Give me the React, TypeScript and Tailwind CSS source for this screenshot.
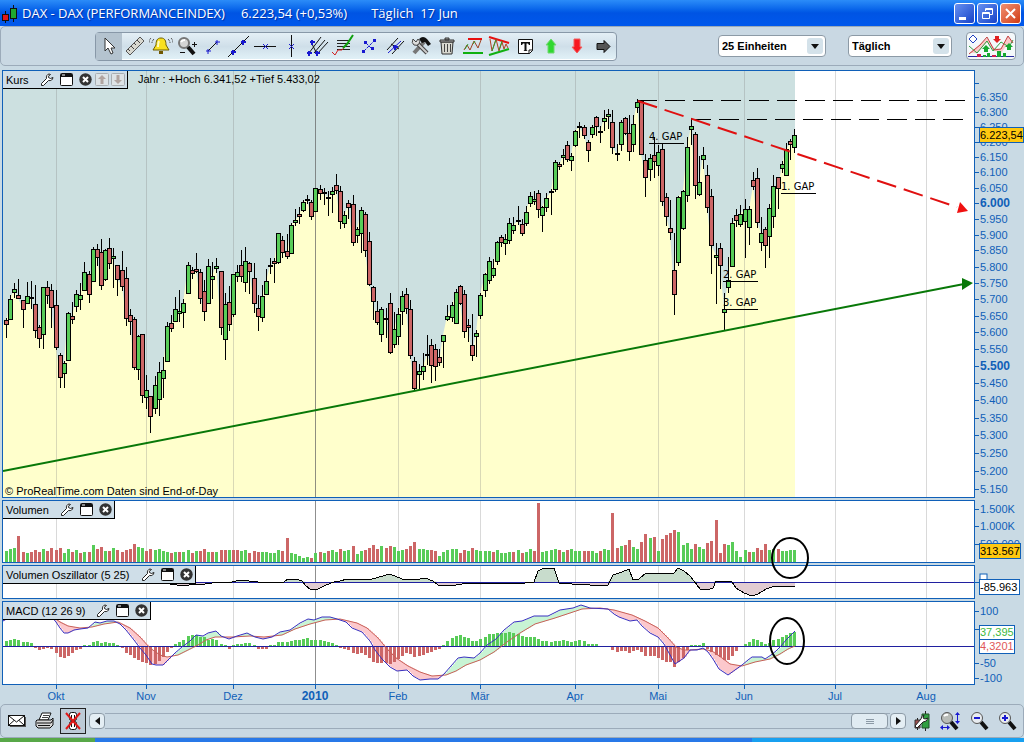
import type { ReactNode } from "react";

const MONTHS = [
  { x: 56, label: "Okt" },
  { x: 146, label: "Nov" },
  { x: 233, label: "Dez" },
  { x: 315, label: "2010", year: true },
  { x: 398, label: "Feb" },
  { x: 480, label: "Mär" },
  { x: 575, label: "Apr" },
  { x: 658, label: "Mai" },
  { x: 744, label: "Jun" },
  { x: 835, label: "Jul" },
  { x: 926, label: "Aug" },
];

// high, body top, body bottom, low, 1 = up day (all y values in window pixels)
const CANDLES = [
  [318, 320, 324, 337, 0], [295, 299, 319, 319, 1], [283, 289, 292, 297, 1], [279, 295, 298, 298, 0],
  [300, 300, 309, 327, 0], [282, 296, 303, 303, 1], [281, 297, 298, 308, 0], [285, 304, 330, 337, 0],
  [325, 327, 338, 347, 0], [287, 287, 334, 348, 1], [281, 287, 295, 303, 0], [284, 290, 307, 327, 0],
  [290, 305, 347, 349, 0], [353, 355, 377, 387, 0], [361, 363, 373, 387, 1], [312, 313, 360, 360, 1],
  [302, 316, 319, 323, 0], [290, 294, 306, 311, 1], [283, 295, 299, 309, 1], [262, 272, 290, 290, 1],
  [271, 274, 294, 302, 0], [247, 249, 281, 281, 1], [244, 249, 257, 265, 0], [239, 252, 285, 289, 0],
  [249, 250, 279, 280, 1], [238, 248, 263, 268, 0], [248, 256, 258, 287, 1], [265, 265, 279, 295, 0],
  [251, 270, 286, 290, 0], [267, 278, 318, 325, 0], [309, 315, 321, 334, 0], [317, 319, 367, 369, 0],
  [335, 336, 369, 379, 1], [334, 334, 395, 402, 0], [375, 390, 397, 408, 1], [396, 396, 416, 432, 0],
  [376, 385, 408, 413, 1], [362, 372, 399, 415, 1], [357, 370, 378, 397, 1], [322, 326, 361, 361, 1],
  [315, 323, 328, 331, 0], [297, 309, 321, 321, 1], [290, 311, 313, 321, 1], [299, 303, 312, 327, 1],
  [262, 265, 293, 293, 1], [267, 270, 273, 278, 0], [253, 269, 271, 272, 0], [269, 272, 298, 303, 0],
  [280, 291, 311, 320, 0], [259, 266, 303, 303, 1], [262, 276, 279, 298, 1], [258, 266, 268, 272, 1],
  [271, 271, 327, 334, 0], [293, 304, 339, 359, 1], [286, 302, 324, 330, 0], [274, 274, 314, 316, 1],
  [265, 272, 276, 281, 1], [250, 265, 276, 281, 0], [247, 261, 282, 291, 1], [262, 263, 271, 293, 0],
  [263, 278, 303, 312, 0], [295, 308, 316, 330, 0], [285, 296, 317, 321, 1], [269, 281, 294, 294, 1],
  [258, 265, 266, 273, 0], [258, 261, 263, 282, 0], [233, 233, 262, 263, 1], [236, 240, 252, 257, 0],
  [234, 251, 256, 258, 0], [223, 225, 253, 253, 1], [209, 220, 222, 225, 1], [207, 214, 216, 223, 0],
  [200, 202, 210, 211, 1], [195, 199, 200, 203, 0], [200, 202, 216, 219, 0], [188, 188, 211, 211, 1],
  [185, 189, 193, 199, 0], [188, 192, 193, 204, 0], [191, 197, 198, 215, 0], [187, 191, 194, 212, 1],
  [174, 185, 190, 193, 0], [186, 191, 221, 228, 0], [211, 215, 223, 227, 1], [200, 203, 207, 218, 0],
  [195, 204, 242, 245, 0], [227, 229, 235, 242, 1], [207, 210, 233, 252, 1], [212, 214, 250, 256, 0],
  [232, 241, 284, 285, 0], [286, 287, 301, 319, 0], [301, 311, 322, 324, 0], [307, 309, 334, 341, 1],
  [308, 318, 319, 337, 0], [293, 303, 352, 353, 0], [312, 329, 344, 347, 1], [308, 314, 336, 344, 1],
  [291, 296, 311, 324, 1], [288, 294, 308, 313, 0], [300, 309, 355, 358, 0], [357, 361, 388, 390, 0],
  [364, 371, 374, 389, 1], [353, 366, 371, 379, 1], [335, 354, 355, 364, 0], [339, 345, 365, 382, 0],
  [344, 349, 366, 380, 0], [349, 357, 362, 365, 0], [335, 335, 341, 367, 1], [305, 316, 319, 320, 1],
  [302, 305, 317, 321, 1], [289, 292, 323, 323, 1], [285, 286, 303, 304, 0], [290, 294, 331, 337, 0],
  [319, 325, 327, 341, 0], [314, 345, 355, 360, 0], [330, 333, 336, 356, 1], [293, 295, 315, 318, 1],
  [273, 274, 290, 296, 1], [257, 261, 280, 283, 1], [259, 268, 275, 277, 1], [241, 242, 261, 264, 1],
  [235, 237, 242, 246, 0], [234, 239, 243, 254, 1], [218, 223, 240, 243, 1], [217, 225, 230, 233, 1],
  [206, 220, 221, 224, 0], [219, 224, 233, 235, 0], [206, 212, 223, 225, 1], [192, 196, 203, 206, 1],
  [191, 199, 201, 204, 1], [190, 193, 209, 217, 0], [206, 207, 215, 231, 1], [193, 198, 207, 211, 1],
  [189, 191, 192, 214, 0], [160, 162, 189, 191, 1], [162, 164, 166, 169, 0], [149, 155, 157, 164, 1],
  [141, 145, 159, 161, 0], [153, 156, 160, 170, 1], [130, 131, 145, 146, 1], [122, 126, 127, 137, 0],
  [125, 127, 135, 138, 0], [140, 142, 150, 161, 0], [125, 127, 134, 137, 1], [116, 117, 126, 135, 0],
  [126, 131, 132, 142, 0], [110, 118, 121, 130, 1], [109, 114, 116, 128, 1], [110, 122, 147, 153, 0],
  [144, 153, 154, 160, 0], [120, 122, 144, 150, 1], [117, 118, 133, 134, 0], [115, 133, 151, 160, 0],
  [115, 124, 144, 151, 1], [99, 102, 107, 112, 1], [101, 101, 154, 154, 0], [154, 160, 177, 196, 0],
  [154, 158, 169, 180, 1], [137, 155, 161, 177, 0], [145, 152, 165, 175, 1], [144, 149, 201, 205, 0],
  [193, 197, 216, 225, 0], [200, 228, 232, 239, 0], [233, 270, 294, 314, 0], [196, 197, 262, 265, 1],
  [190, 191, 228, 229, 1], [137, 147, 195, 201, 1], [118, 126, 129, 144, 1], [132, 134, 185, 198, 0],
  [156, 182, 194, 195, 1], [147, 155, 159, 168, 1], [165, 175, 207, 212, 0], [189, 196, 245, 273, 0],
  [243, 255, 257, 303, 1], [243, 248, 265, 288, 0], [293, 309, 312, 329, 1], [257, 280, 287, 292, 1],
  [218, 223, 266, 266, 1], [209, 215, 220, 226, 0], [205, 214, 224, 226, 1], [199, 209, 221, 257, 1],
  [206, 209, 227, 244, 1], [172, 180, 186, 189, 0], [168, 178, 222, 227, 0], [217, 233, 242, 250, 1],
  [227, 229, 245, 267, 0], [204, 208, 236, 257, 1], [175, 186, 216, 227, 1], [177, 177, 188, 208, 0],
  [161, 164, 168, 172, 1], [143, 149, 175, 175, 1], [139, 141, 144, 159, 0], [129, 135, 147, 152, 1],
];

// bar heights, negative = down day
const VOLUMES = [
  11, 13, 14, -26, -10, 9, -10, -12, -10, 13, -11, -14, -12, -14, 9, 13, -10, 12, -9, 10,
  -10, 17, -13, -15, 11, -11, 14, -12, -10, -12, -13, -18, 15, 14, -11, -13, 12, 13, 11, 10,
  -9, 10, -10, 10, 12, -9, 11, -11, -13, 10, -10, 10, -12, -12, 12, -12, -12, 11, 12, -9,
  -11, -10, 10, 10, 9, 9, 12, -11, -24, 9, 8, 6, 4, 5, -4, 9, -10, 9, -11, 12,
  10, -13, 11, 12, -16, 8, 11, -12, -14, -17, -13, 16, -14, -16, 15, 11, 12, -13, -16, -20,
  13, 13, 12, -12, -11, 6, 10, 12, 13, 13, -9, -12, 11, -14, 12, 11, 11, 11, -10, 12,
  9, 9, 10, -10, 12, -9, 10, 13, -11, -59, 10, 11, 12, 13, -12, 10, -12, 13, 11, 11,
  -11, -11, 11, 9, -11, 13, 12, -49, -14, 16, -17, -22, 15, 13, -20, -28, 24, -25, 11, -23,
  -27, -29, -32, 30, 17, 19, 13, -18, 15, 13, -19, -21, -42, -9, -18, 17, 20, 11, 5, 12,
  -10, 10, -14, -12, -18, 12, 13, -13, 11, 11, 12, 12,
];

const HISTOGRAM = [
  5, 6, 7, 6, 4, 4, 3, -1, -3, -2, -1, -2, -6, -10, -11, -9, -6, -3, -2, 1,
  1, 4, 5, 3, 4, 3, 3, 1, -1, -6, -8, -11, -13, -15, -16, -18, -17, -14, -10, -5,
  -1, 2, 4, 6, 10, 11, 11, 9, 9, 6, 7, 6, 2, 1, -2, 1, 2, 2, 3, 3,
  1, -2, -2, -2, 1, 1, 4, 4, 4, 5, 6, 6, 7, 8, 6, 6, 6, 5, 4, 3,
  1, -1, -2, -3, -6, -7, -6, -8, -11, -15, -16, -16, -16, -17, -15, -12, -9, -6, -7, -10,
  -9, -8, -6, -5, -3, -2, 1, 5, 8, 10, 11, 9, 8, 5, 5, 7, 9, 12, 12, 13,
  13, 13, 14, 13, 12, 10, 9, 9, 9, 7, 5, 5, 4, 5, 5, 6, 5, 4, 5, 6,
  5, 2, 2, 2, 0, 0, 0, -3, -5, -4, -4, -6, -4, -3, -5, -9, -9, -9, -11, -13,
  -15, -15, -20, -15, -11, -3, 1, 1, 1, 3, -2, -5, -8, -10, -13, -13, -9, -4, 0, 2,
  4, 7, 6, 4, 2, 3, 6, 7, 9, 11, 13, 14,
];

const MACD_LINE = [
  [3, 621], [12, 616], [50, 615], [56, 622], [60, 628], [64, 633], [68, 633], [74, 630], [80, 629],
  [88, 628], [95, 622], [100, 623], [107, 621], [114, 621], [120, 624], [126, 630], [134, 640],
  [140, 648], [146, 655], [152, 664], [156, 665], [163, 665], [168, 660], [175, 653], [182, 647],
  [190, 641], [196, 635], [203, 636], [208, 633], [216, 631], [221, 636], [229, 639], [237, 636],
  [247, 633], [255, 637], [263, 639], [272, 637], [280, 632], [290, 630], [300, 623], [308, 619],
  [314, 620], [322, 617], [330, 617], [337, 619], [346, 622], [352, 628], [362, 632], [370, 641],
  [375, 650], [382, 659], [390, 667], [397, 671], [407, 670], [413, 676], [420, 680], [430, 679],
  [438, 679], [444, 674], [451, 666], [458, 658], [464, 657], [474, 658], [480, 653], [487, 645],
  [496, 639], [504, 630], [514, 622], [522, 621], [534, 616], [548, 616], [560, 610], [573, 608],
  [581, 605], [590, 608], [608, 609], [614, 614], [619, 617], [630, 621], [637, 620], [642, 626],
  [650, 633], [658, 637], [664, 644], [669, 653], [675, 664], [684, 658], [690, 650], [697, 650],
  [703, 648], [708, 652], [713, 659], [719, 669], [728, 675], [735, 670], [742, 665], [748, 660],
  [752, 657], [762, 657], [765, 659], [771, 655], [776, 651], [781, 646], [786, 640], [790, 636],
  [795, 631],
];

const SIGNAL_LINE = [
  [3, 619], [50, 615], [60, 622], [68, 626], [80, 628], [92, 627], [104, 624], [118, 622],
  [130, 628], [140, 637], [150, 648], [160, 655], [167, 657], [178, 655], [188, 650], [198, 645],
  [206, 640], [215, 637], [232, 637], [250, 636], [264, 637], [282, 635], [295, 629], [310, 624],
  [325, 620], [340, 619], [357, 623], [367, 628], [378, 638], [388, 650], [396, 658], [408, 666],
  [420, 672], [432, 676], [446, 675], [456, 671], [466, 665], [480, 660], [494, 652], [507, 642],
  [520, 633], [535, 624], [555, 618], [570, 613], [582, 609], [600, 608], [614, 610], [632, 615],
  [645, 621], [658, 628], [668, 638], [676, 647], [684, 650], [690, 650], [703, 649], [712, 651],
  [722, 658], [730, 664], [742, 666], [755, 662], [770, 659], [780, 654], [788, 649], [795, 646],
];

const OSCILLATOR = [
  [3, 581], [20, 579], [40, 582], [60, 581], [84, 582], [88, 584], [92, 582], [130, 579], [170, 584],
  [183, 586], [195, 584], [205, 584], [220, 582], [228, 583], [240, 580], [258, 582], [275, 583],
  [284, 582], [288, 579], [296, 579], [302, 581], [306, 586], [310, 589], [318, 589], [326, 585],
  [334, 582], [340, 581], [347, 579], [372, 579], [390, 574], [402, 579], [415, 580], [425, 578],
  [433, 581], [438, 585], [450, 586], [462, 584], [475, 583], [490, 583], [505, 584], [525, 583],
  [534, 582], [538, 571], [542, 569], [554, 568], [559, 583], [572, 584], [590, 585], [608, 585],
  [613, 575], [622, 572], [629, 569], [633, 580], [639, 579], [646, 573], [660, 573], [667, 574],
  [674, 573], [678, 568], [684, 571], [690, 576], [694, 581], [700, 589], [707, 590], [713, 588],
  [716, 581], [732, 582], [736, 588], [744, 593], [752, 596], [758, 594], [766, 589], [775, 586],
  [795, 586],
];

const PRICES = Array.from({ length: 25 }, (_, i) => 6350 - i * 50);

const UP = "#58cc58";
const DOWN = "#cc6666";

const barX = (i: number) => Math.round(6 + i * 4.1257);

// The price scale is logarithmic, 6.350 sits at y = 97
const priceY = (price: number) =>
  Math.round(97 + 1871 * Math.log(6350 / price));

const formatPrice = (price: number) =>
  `${Math.floor(price / 1000)}.${String(price % 1000).padStart(3, "0")}`;

const toPoints = (line: number[][]) => line.map((p) => p.join(",")).join(" ");

const valueAt = (line: number[][], x: number) => {
  const next = line.findIndex((p) => p[0] >= x);
  if (next <= 0) return line[0][1];
  const [x0, y0] = line[next - 1];
  const [x1, y1] = line[next];
  return y0 + ((y1 - y0) * (x - x0)) / (x1 - x0);
};

function Grid({ top, bottom }: { top: number; bottom: number }) {
  return (
    <g shapeRendering="crispEdges">
      {MONTHS.map((m) => (
        <rect
          key={m.label}
          x={m.x}
          y={top}
          width={1}
          height={bottom - top}
          fill={m.year ? "#606060" : "#808080"}
          opacity={m.year ? 0.7 : 0.3}
        />
      ))}
    </g>
  );
}

function WrenchIcon() {
  return (
    <svg width="14" height="14" viewBox="0 0 14 14" aria-hidden="true">
      <path
        d="M9 1C7 1.500 6 3 6.500 5.500L1.500 10.500V12.500H3.500L8.500 7.500C11 8 12.500 7 13 4.500L10.500 5.500L8.500 4.500L8.300 3.200L10.500 1.500Z"
        fill="#fff"
        stroke="#222"
      />
    </svg>
  );
}

function WindowIcon() {
  return (
    <svg width="13" height="13" viewBox="0 0 13 13" aria-hidden="true">
      <rect x="0.500" y="0.500" width="12" height="12" rx="1" fill="#fff" stroke="#111" />
      <path d="M1 1h11v3H1z" fill="#111" />
      <path d="M2 2h3" stroke="#fff" />
    </svg>
  );
}

function CloseIcon() {
  return (
    <svg width="13" height="13" viewBox="0 0 13 13" aria-hidden="true">
      <circle cx="6.500" cy="6.500" r="6.200" fill="#333" />
      <path d="M4 4l5 5M9 4l-5 5" stroke="#fff" strokeWidth="2" />
    </svg>
  );
}

function MoveIcon({ down }: { down?: boolean }) {
  return (
    <svg width="14" height="13" viewBox="0 0 14 13" aria-hidden="true">
      <rect x="0.500" y="0.500" width="13" height="12" rx="1" fill="#dde3e6" stroke="#a8aeb2" />
      <path
        d={down ? "M7 11L3 7h2.500V2h3v5H11z" : "M7 2L3 6h2.500v5h3V6H11z"}
        fill="#b0a4a0"
      />
    </svg>
  );
}

function PanelHeader({ title, movable }: { title: string; movable?: boolean }) {
  return (
    <div className="absolute top-0 left-0 flex h-[18px] items-center gap-[6px] border-r border-b border-black bg-[#cfdee8] pr-[2px] pl-[3px]">
      <h2 className="pr-[5px] text-[11px] leading-[16px] whitespace-nowrap text-black">
        {title}
      </h2>
      <button aria-label={`${title} Einstellungen`}>
        <WrenchIcon />
      </button>
      <button aria-label={`${title} Fenster`}>
        <WindowIcon />
      </button>
      <button aria-label={`${title} schließen`}>
        <CloseIcon />
      </button>
      {movable && (
        <div className="-ml-[3px] flex gap-[2px]">
          <button aria-label="Nach oben">
            <MoveIcon />
          </button>
          <button aria-label="Nach unten">
            <MoveIcon down />
          </button>
        </div>
      )}
    </div>
  );
}

type PanelProps = {
  heightClass: string;
  top: number;
  header: ReactNode;
  axis: ReactNode;
  children: ReactNode;
};

// Drawings use window coordinates, each panel shifts them to its own corner
function Panel({ heightClass, top, header, axis, children }: PanelProps) {
  return (
    <section className={`flex ${heightClass}`}>
      <div className="relative min-w-0 grow border border-[#1060b8] bg-white">
        <svg className="block h-full w-full" aria-hidden="true">
          <g transform={`translate(-3 ${-top - 1})`}>{children}</g>
        </svg>
        {header}
      </div>
      <svg className="block h-full w-[49px] shrink-0 overflow-visible" aria-hidden="true">
        <g transform={`translate(-975 ${-top})`}>{axis}</g>
      </svg>
    </section>
  );
}

function Tick({ y, label, bold }: { y: number; label?: string; bold?: boolean }) {
  return (
    <>
      <rect x={975} y={y} width={4} height={1} fill="#1060b8" />
      <text
        x={980}
        y={y + 4}
        fill="#1060b8"
        fontSize={bold ? 12 : 11}
        fontWeight={bold ? 700 : 400}
      >
        {label}
      </text>
    </>
  );
}

type TagProps = {
  y: number;
  width: number;
  height: number;
  label: string;
  fill?: string;
  color?: string;
};

function Tag({ y, width, height, label, fill = "#fff", color = "#000" }: TagProps) {
  return (
    <>
      <rect x={979} y={y} width={width} height={height} fill="#1060b8" />
      <rect x={980} y={y + 1} width={width - 2} height={height - 2} fill={fill} />
      <text x={980} y={y + height - 4} fill={color} fontSize={11}>
        {label}
      </text>
    </>
  );
}

function GapLabel({ x, y, label }: { x: number; y: number; label: string }) {
  return (
    <>
      <text
        x={x}
        y={y - 3}
        fontSize={10}
        fontFamily="'DejaVu Sans', sans-serif"
      >
        {label}
      </text>
      <rect x={x} y={y} width={35} height={1} />
    </>
  );
}

function PricePanel() {
  const closes = CANDLES.map(([, top, bottom, , up], i) => [
    barX(i),
    up ? top : bottom,
  ]);

  return (
    <Panel
      heightClass="h-[428px]"
      top={70}
      header={
        <>
          <PanelHeader title="Kurs" movable />
          <p className="absolute top-px left-[135px] text-[11px] leading-[14px] whitespace-nowrap">
            Jahr : +Hoch 6.341,52 +Tief 5.433,02
          </p>
          <p className="absolute bottom-0 left-[2px] text-[11px] leading-[12px] whitespace-nowrap">
            © ProRealTime.com Daten sind End-of-Day
          </p>
        </>
      }
      axis={
        <>
          <Tick y={83} />
          {PRICES.map((p) => (
            <Tick
              key={p}
              y={priceY(p)}
              label={formatPrice(p)}
              bold={p % 500 === 0}
            />
          ))}
          <Tag y={127} width={45} height={16} label="6.223,54" fill="#ffc810" />
        </>
      }
    >
      <rect x={3} y={71} width={792} height={426} fill="#cce0e0" />
      <polygon
        points={`3,497 3,324 ${toPoints(closes)} 795,135 795,497`}
        fill="#ffffcc"
      />
      <Grid top={71} bottom={497} />
      <g shapeRendering="crispEdges">
        {CANDLES.map(([high, top, bottom, low, up], i) => {
          const x = barX(i);
          return (
            <g key={i}>
              <rect x={x} y={high} width={1} height={low - high + 1} />
              <rect x={x - 2} y={top} width={5} height={bottom - top + 1} />
              {bottom - top > 1 && (
                <rect
                  x={x - 1}
                  y={top + 1}
                  width={3}
                  height={bottom - top - 1}
                  fill={up ? UP : DOWN}
                />
              )}
            </g>
          );
        })}
        <path
          d="M637 100.500H965M691 119.500H965"
          stroke="#000"
          strokeDasharray="20 8"
        />
        <GapLabel x={649} y={143} label="4. GAP" />
        <GapLabel x={781} y={193} label="1. GAP" />
        <GapLabel x={723} y={281} label="2. GAP" />
        <GapLabel x={723} y={309} label="3. GAP" />
      </g>
      <path
        d="M638 101L957 207"
        stroke="#e01010"
        strokeWidth={2}
        strokeDasharray="20 8"
      />
      <path d="M968 211L960 202L957 213Z" fill="#f01010" />
      <path d="M3 471L964 284" stroke="#087808" strokeWidth={2} />
      <path d="M973 283L962 278V290Z" fill="#087808" />
    </Panel>
  );
}

function VolumePanel() {
  return (
    <Panel
      heightClass="h-[63px]"
      top={500}
      header={<PanelHeader title="Volumen" />}
      axis={
        <>
          <Tick y={509} label="1.500K" />
          <Tick y={526} label="1.000K" />
          <Tick y={544} label="500.000" />
          <Tag y={543} width={42} height={16} label="313.567" fill="#ffc810" />
        </>
      }
    >
      <Grid top={501} bottom={562} />
      <g shapeRendering="crispEdges">
        {VOLUMES.map((v, i) => (
          <rect
            key={i}
            x={barX(i) - 1}
            y={562 - Math.abs(v)}
            width={3}
            height={Math.abs(v)}
            fill={v > 0 ? UP : DOWN}
          />
        ))}
      </g>
    </Panel>
  );
}

function OscillatorPanel() {
  const above = OSCILLATOR.map(([x, y]) => [x, Math.min(y, 582)]);
  const below = OSCILLATOR.map(([x, y]) => [x, Math.max(y, 582)]);

  return (
    <Panel
      heightClass="h-[34px]"
      top={565}
      header={<PanelHeader title="Volumen Oszillator (5 25)" />}
      axis={
        <>
          <Tick y={582} />
          <rect x={980} y={574} width={7} height={8} fill="#fff" stroke="#1060b8" />
          <Tag y={579} width={41} height={16} label="-85.963" />
        </>
      }
    >
      <Grid top={566} bottom={598} />
      <polygon points={`3,582 ${toPoints(above)} 795,582`} fill="#c8dccc" />
      <polygon points={`3,582 ${toPoints(below)} 795,582`} fill="#e2ccd2" />
      <rect x={3} y={582} width="100%" height={1} fill="#2020a0" />
      <polyline
        points={toPoints(OSCILLATOR)}
        fill="none"
        stroke="#000"
        shapeRendering="crispEdges"
      />
    </Panel>
  );
}

function MacdPanel() {
  const slices = Array.from({ length: 396 }, (_, i) => 3 + i * 2);

  return (
    <Panel
      heightClass="h-[84px]"
      top={601}
      header={<PanelHeader title="MACD (12 26 9)" />}
      axis={
        <>
          <Tick y={611} label="100" />
          <Tick y={629} />
          <Tick y={663} label="-50" />
          <Tick y={678} label="-100" />
          <Tag y={639} width={36} height={15} label="4,3201" color="#e05858" />
          <Tag y={625} width={36} height={15} label="37,395" color="#40b840" />
        </>
      }
    >
      <Grid top={602} bottom={684} />
      {slices.map((x) => {
        const macd = valueAt(MACD_LINE, x);
        const signal = valueAt(SIGNAL_LINE, x);
        return (
          <rect
            key={x}
            x={x}
            y={Math.min(macd, signal)}
            width={2}
            height={Math.abs(macd - signal)}
            fill={macd < signal ? "#c8f4d4" : "#fcc8cc"}
          />
        );
      })}
      <g shapeRendering="crispEdges">
        {HISTOGRAM.map((h, i) => (
          <rect
            key={i}
            x={barX(i) - 1}
            y={h > 0 ? 646 - h : 647}
            width={3}
            height={Math.abs(h)}
            fill={h > 0 ? UP : DOWN}
          />
        ))}
        <rect x={3} y={646} width="100%" height={1} fill="#2020a0" />
      </g>
      <polyline points={toPoints(SIGNAL_LINE)} fill="none" stroke="#c86058" />
      <polyline points={toPoints(MACD_LINE)} fill="none" stroke="#3830c0" />
    </Panel>
  );
}

function TimeAxis() {
  return (
    <svg className="block h-[19px] w-full" aria-hidden="true">
      <g transform="translate(-2 -685)">
        {MONTHS.map((m) => (
          <g key={m.label} fill="#1060b8">
            <rect x={m.x} y={685} width={1} height={4} />
            <text
              x={m.x}
              y={700}
              textAnchor="middle"
              fontSize={m.year ? 12 : 11}
              fontWeight={m.year ? 700 : 400}
            >
              {m.label}
            </text>
          </g>
        ))}
      </g>
    </svg>
  );
}

// Small blue anchor cross used by the line tools
const cross = (x: number, y: number) => `M${x - 2} ${y}h5M${x} ${y - 2}v5`;

const TOOLS: { label: string; icon: ReactNode }[] = [
  {
    label: "Zeiger",
    icon: (
      <path
        d="M8 4v13l3-3 3 6 2-1-2-5h4z"
        fill="#fff"
        stroke="#333"
      />
    ),
  },
  {
    label: "Lineal",
    icon: (
      <>
        <path d="M3 17L17 3l4 4L7 21z" fill="#d8d8d0" stroke="#555" />
        <path d="M5 15l2 2M8 12l3 3M11 9l2 2M14 6l3 3" stroke="#444" />
      </>
    ),
  },
  {
    label: "Alarm",
    icon: (
      <>
        <path
          d="M12 4c-4 0-5 3-5 7l-3 5h16l-3-5c0-4-1-7-5-7z"
          fill="#f8e020"
          stroke="#706000"
        />
        <path d="M10 7c-1 2-1 4-1 6" stroke="#fffbc0" strokeWidth="2" fill="none" />
        <path d="M10 17h4v3h-4z" fill="#705800" />
        <path
          d="M5 5Q3 7 3 9M2 4Q0 6 0 9M19 5q2 2 2 4M22 4q2 2 2 5"
          stroke="#444"
          fill="none"
          strokeDasharray="2 1"
        />
      </>
    ),
  },
  {
    label: "Zoom",
    icon: (
      <>
        <circle cx="9" cy="9" r="5" fill="#d4d4d4" stroke="#777" strokeWidth="2" />
        <path d="M6 8q1-2 4-2" stroke="#fff" strokeWidth="2" fill="none" />
        <path d="M13 13l6 7" stroke="#111" strokeWidth="4" />
        <path d="M17 10.500h5M19.500 8v5M5 18.500h5" stroke="#111" />
      </>
    ),
  },
  {
    label: "Segment",
    icon: (
      <>
        <path d="M7 17L16 8" stroke="#111" />
        <path d={cross(7, 17) + cross(16, 8)} stroke="#1818d0" />
      </>
    ),
  },
  {
    label: "Gerade",
    icon: (
      <>
        <path d="M1 23L22 2" stroke="#111" />
        <path d={cross(6, 18) + cross(16, 8)} stroke="#1818d0" strokeWidth="2" />
      </>
    ),
  },
  {
    label: "Horizontale",
    icon: (
      <>
        <path d="M1 12.500h22" stroke="#111" />
        <path d="M10 10l5 5M15 10l-5 5" stroke="#1818d0" />
      </>
    ),
  },
  {
    label: "Vertikale",
    icon: (
      <>
        <path d="M12.500 1v22" stroke="#111" />
        <path d="M10 10l5 5M15 10l-5 5" stroke="#1818d0" />
      </>
    ),
  },
  {
    label: "Gabel",
    icon: (
      <>
        <path d="M4 19L16 3M9 19L20 6M12 20l11-12M6 8l6 12" stroke="#111" fill="none" />
        <path
          d={cross(4, 19) + cross(7, 8) + cross(12, 19)}
          stroke="#1818d0"
          strokeWidth="2"
        />
      </>
    ),
  },
  {
    label: "Fibonacci",
    icon: (
      <>
        <path d="M6 6.500h13M6 9.500h13M6 12.500h13M6 15.500h13" stroke="#222" />
        <path d="M1 18l3 3 3-5h4l4-5" stroke="#d02020" fill="none" />
        <path d="M12 14l4-4 6-9" stroke="#10a010" strokeWidth="2" fill="none" />
      </>
    ),
  },
  {
    label: "Regression",
    icon: (
      <>
        <path d="M7 17L17 7M9 9l6 6" stroke="#1818d0" strokeDasharray="3 1" />
        <path
          d="M5 16h3v3H5zM16 5h3v3h-3zM7 7h3v3H7zM14 13h3v3h-3z"
          fill="#1818d0"
        />
      </>
    ),
  },
  {
    label: "Kanal",
    icon: (
      <>
        <path d="M4 16L15 4M9 20L21 7M8 10l8 5" stroke="#111" />
        <path d="M5 19L18 7" stroke="#1818d0" />
        <path d={cross(12, 13)} stroke="#1818d0" strokeWidth="2" />
      </>
    ),
  },
  {
    label: "Werkzeuge",
    icon: (
      <>
        <path d="M5 19L15 8" stroke="#777" strokeWidth="4" />
        <path d="M10 5q4-4 8 0l4 5-3 2-3-4-3 1z" fill="#111" />
        <path d="M7 8l11 11" stroke="#444" strokeWidth="4" />
        <path d="M7 8l11 11" stroke="#ccc" strokeWidth="2" />
        <path d="M4 5l3 3 2-3q3 2 1 5-2 2-5 1-3-2-1-6z" fill="#ddd" stroke="#444" />
      </>
    ),
  },
  {
    label: "Löschen",
    icon: (
      <>
        <path d="M6 8h12l-1 12H7z" fill="#d8d8d0" stroke="#333" />
        <path d="M5 6h14v2H5zM10 4h4v2h-4z" fill="#aaa" stroke="#333" />
        <path d="M9.500 10v8M12.500 10v8M15.500 10v8" stroke="#444" />
      </>
    ),
  },
  {
    label: "Unterstützung",
    icon: (
      <>
        <path d="M7 5h14" stroke="#e81010" strokeWidth="2" />
        <path d="M2 19h20" stroke="#10b010" strokeWidth="2" />
        <path d="M3 16l3-5 3 5 4-9 4 7 3-8" stroke="#a04020" fill="none" />
        <path d="M4 15l3-5M12 10l2-3" stroke="#30a030" />
      </>
    ),
  },
  {
    label: "Dreieck",
    icon: (
      <>
        <path d="M2 3l20 6" stroke="#e81010" strokeWidth="2" />
        <path d="M2 21l20-6" stroke="#10b010" strokeWidth="2" />
        <path
          d="M3 5l2 12 4-12 3 12 3-9 2 7 2-5 2 4"
          stroke="#b04020"
          fill="none"
        />
        <path d="M5 17l4-11M12 16l3-9" stroke="#30a030" />
      </>
    ),
  },
  {
    label: "Text",
    icon: (
      <>
        <path d="M5.500 5.500h14v11l-3 3h-11z" fill="#fff" stroke="#111" />
        <path d="M8 8h9v3h-1l-1-1.500h-1.500V16l1 1h-4l1-1V9.500H10L9 11H8z" fill="#111" />
        <path d="M16 20v-4h4" stroke="#111" fill="none" />
      </>
    ),
  },
  {
    label: "Pfeil nach oben",
    icon: <path d="M12 5l5 6h-2v8h-6v-8H7z" fill="#30d830" stroke="#70d870" />,
  },
  {
    label: "Pfeil nach unten",
    icon: <path d="M12 19l5-6h-2V5h-6v8H7z" fill="#f81820" stroke="#f06060" />,
  },
  {
    label: "Pfeil nach rechts",
    icon: <path d="M19 12.500l-6-6v3H6v6h7v3z" fill="#555" stroke="#111" />,
  },
];

function TitleBar() {
  return (
    <header className="flex h-[26px] items-center bg-linear-to-b from-[#2b8cf8] via-[#0054e4] to-[#0058ec] pr-[3px] pl-[2px] text-white">
      <svg width="16" height="20" viewBox="0 0 16 20" aria-hidden="true">
        <path d="M3.500 8v12M11.500 2v17" stroke="#111" />
        <rect x="0.500" y="11.500" width="6" height="6" fill="#e01818" stroke="#111" />
        <rect x="8.500" y="5.500" width="6" height="10" fill="#20a830" stroke="#111" />
      </svg>
      <h1 className="ml-1 flex grow gap-4 font-['Open_Sans',sans-serif] text-[13px] leading-[18px] font-medium whitespace-nowrap [text-shadow:1px_1px_1px_#0030a0]">
        <span>DAX - DAX (PERFORMANCEINDEX)</span>
        <span className="mr-2">6.223,54 (+0,53%)</span>
        <span>
          Täglich&nbsp; 17 Jun
        </span>
      </h1>
      <div className="flex gap-[2px]">
        <button
          aria-label="Minimieren"
          className="rounded-[3px] border border-white bg-linear-to-br from-[#6890f0] to-[#1840c8]"
        >
          <svg width="19" height="19" viewBox="0 0 19 19">
            <path d="M4 13h7v3H4z" fill="#fff" />
          </svg>
        </button>
        <button
          aria-label="Wiederherstellen"
          className="rounded-[3px] border border-white bg-linear-to-br from-[#6890f0] to-[#1840c8]"
        >
          <svg width="19" height="19" viewBox="0 0 19 19" fill="none" stroke="#fff">
            <path d="M7.500 7V4.500h7v6H12M7 5.500h7" />
            <path d="M4.500 8.500h7v6h-7zM4 9.500h7" />
          </svg>
        </button>
        <button
          aria-label="Schließen"
          className="rounded-[3px] border border-white bg-linear-to-br from-[#f09070] to-[#d03808]"
        >
          <svg width="19" height="19" viewBox="0 0 19 19">
            <path d="M5 5l9 9M14 5l-9 9" stroke="#fff" strokeWidth="2" />
          </svg>
        </button>
      </div>
    </header>
  );
}

function Dropdown({ label, value, widthClass }: { label: string; value: string; widthClass: string }) {
  return (
    <div className={`relative ${widthClass}`}>
      <select
        aria-label={label}
        className="block h-[22px] w-full appearance-none rounded-[4px] border border-[#8c9aa6] bg-white pl-[3px] text-[11px] font-bold text-black"
      >
        <option>{value}</option>
      </select>
      <span className="pointer-events-none absolute top-[3px] right-[3px] flex h-4 w-4 items-center justify-center rounded-[3px] bg-[#d4e2ea]">
        <svg width="8" height="5" viewBox="0 0 8 5">
          <path d="M0 0h8L4 5z" fill="#111" />
        </svg>
      </span>
    </div>
  );
}

function Toolbar() {
  return (
    <div className="flex h-[40px] items-center rounded-[5px] border border-[#9cabba] bg-[#c9d8e3] pr-[7px] pl-[94px]">
      <div className="flex h-[29px] rounded-[4px] border border-[#8898a8] bg-linear-to-b from-[#e4eff6] via-[#cfdfe9] to-[#e2f2f8] shadow-[inset_0_-1px_0_#fff]">
        {TOOLS.map((tool, i) => (
          <button
            key={tool.label}
            aria-label={tool.label}
            className={`flex w-[26px] items-center justify-center ${i === 0 ? "bg-[#b4c3cf]" : ""}`}
          >
            <svg width="24" height="24" viewBox="0 0 24 24">
              {tool.icon}
            </svg>
          </button>
        ))}
      </div>
      <div className="grow" />
      <Dropdown label="Anzahl Einheiten" value="25 Einheiten" widthClass="w-[108px]" />
      <div className="w-[22px]" />
      <Dropdown label="Zeitraum" value="Täglich" widthClass="w-[104px]" />
      <button
        aria-label="Indikatoren"
        className="ml-[14px] rounded-[4px] border border-[#8c9aa6] bg-[#f4f8fa]"
      >
        <svg width="48" height="26" viewBox="0 0 48 26" fill="none">
          <path d="M2 20L12 12L20 5L27 15L34 16L41 3L46 9L40 12L34 20L26 17L20 9L10 20Z" fill="#fcc8c8" />
          <path d="M2 13L10 20L20 8L26 18L34 9L42 14L46 7" stroke="#30a040" />
          <path d="M2 21L13 12L20 4L27 17L34 16L41 3L46 10" stroke="#c04040" />
          <path d="M6 2l4 4-4 4-4-4z" fill="#fff" stroke="#2040c0" />
          <path d="M19 12l4 4h-2v3h-4v-3h-2zM42 10l4 4h-2v3h-4v-3h-2z" fill="#18a830" />
          <path d="M30 10l-4-4h2V3h4v3h2z" fill="#e02020" />
          <path d="M1 23.500h46" stroke="#2828a0" />
          <path d="M10 21h4v3h-4zM25 22h4v2h-4z" fill="#d02050" />
          <path d="M16 22h3v2h-3zM20 20h3v4h-3zM30 18h4v6h-4zM36 20h3v4h-3z" fill="#18a830" />
        </svg>
      </button>
    </div>
  );
}

function Magnifier({ children }: { children: ReactNode }) {
  return (
    <svg width="20" height="20" viewBox="0 0 20 20">
      <path d="M12 11l6 7" stroke="#111" strokeWidth="4" />
      <circle cx="8" cy="7" r="5.500" fill="#e8ecf0" stroke="#555" />
      {children}
    </svg>
  );
}

function BottomBar() {
  return (
    <footer className="flex h-[34px] items-center rounded-[5px] border border-[#9cabba] bg-[#c9d8e3] px-[6px]">
      <button aria-label="E-Mail">
        <svg width="20" height="14" viewBox="0 0 20 14">
          <path d="M2 3h17v10H3z" fill="#555" />
          <rect x="1.500" y="1.500" width="16" height="10" fill="#fff" stroke="#111" />
          <path d="M2 2l7.500 6L17 2M2 11l5-4.500M17 11l-5-4.500" stroke="#111" fill="none" />
        </svg>
      </button>
      <button aria-label="Drucken" className="ml-2">
        <svg width="20" height="18" viewBox="0 0 20 18">
          <path d="M7 1h9l-3 7H4z" fill="#fff" stroke="#111" />
          <path d="M8 3.500h6M7 5.500h6" stroke="#444" />
          <path d="M2 8h14l2-2v7l-3 3H3l-2-2V9z" fill="#d8d8d8" stroke="#111" />
          <path d="M2 11h14M3 13.500h12M16 11l2-3" stroke="#111" fill="none" />
        </svg>
      </button>
      <button
        aria-label="Verknüpfung lösen"
        className="ml-[5px] flex h-[26px] w-[26px] items-center justify-center border border-[#222] bg-[#bccad6]"
      >
        <svg width="18" height="20" viewBox="0 0 18 20" fill="none">
          <rect x="5.500" y="1.500" width="7" height="8" rx="2" fill="#fff" stroke="#111" />
          <rect x="5.500" y="10.500" width="7" height="8" rx="2" fill="#fff" stroke="#111" />
          <path d="M7.500 4v12M10.500 4v12" stroke="#111" />
          <path d="M2 2l14 16M16 2L2 18" stroke="#e01818" strokeWidth="2" />
        </svg>
      </button>
      <button
        aria-label="Nach links"
        className="ml-[3px] flex h-4 w-4 items-center justify-center rounded-[4px] border border-[#8c9aa6] bg-[#e4eef4]"
      >
        <svg width="5" height="8" viewBox="0 0 5 8">
          <path d="M5 0v8L0 4z" fill="#111" />
        </svg>
      </button>
      <div className="flex h-4 grow justify-end border-y border-[#9cabba]">
        <button
          aria-label="Zeitleiste verschieben"
          className="-my-px mr-[2px] flex h-4 w-[37px] flex-col items-center justify-center gap-px rounded-[4px] border border-[#8c9aa6] bg-[#e0ebf2]"
        >
          <span className="h-px w-2 bg-[#8c9aa6]" />
          <span className="h-px w-2 bg-[#8c9aa6]" />
          <span className="h-px w-2 bg-[#8c9aa6]" />
        </button>
      </div>
      <button
        aria-label="Nach rechts"
        className="flex h-4 w-4 items-center justify-center rounded-[4px] border border-[#8c9aa6] bg-[#e4eef4]"
      >
        <svg width="5" height="8" viewBox="0 0 5 8">
          <path d="M0 0v8l5-4z" fill="#111" />
        </svg>
      </button>
      <div className="ml-[7px] flex items-center gap-2">
        <button aria-label="Darstellung">
          <svg width="18" height="20" viewBox="0 0 18 20">
            <path d="M4.500 7v12M12.500 0v20" stroke="#222" />
            <path d="M2 9h5v8H2z" fill="#a05050" stroke="#333" />
            <path d="M9 3h7v14H9z" fill="#30a040" stroke="#205028" />
            <path
              d="M11 4q-3 1-3 4l-6 7 2 2 6-6q4 0 5-4l-3 1-2-1z"
              fill="#fff"
              stroke="#222"
            />
          </svg>
        </button>
        <button aria-label="Anpassen">
          <svg width="22" height="20" viewBox="0 0 22 20">
            <circle cx="8" cy="7" r="5.500" fill="#b8bcb8" stroke="#555" />
            <path d="M5 5q2-2 4-1" stroke="#fff" strokeWidth="2" fill="none" />
            <path d="M12 11l6 7" stroke="#111" strokeWidth="4" />
            <path d="M18.500 3v8M3 16.500h6" stroke="#1818d0" />
            <path
              d="M16 4l2.500-3L21 4zM16 10l2.500 3 2.500-3zM4 14v5l-3-2.500zM8 14v5l3-2.500z"
              fill="#1818d0"
            />
          </svg>
        </button>
        <button aria-label="Verkleinern">
          <Magnifier>
            <path d="M5 7h6" stroke="#1818d0" strokeWidth="2" />
          </Magnifier>
        </button>
        <button aria-label="Vergrößern">
          <Magnifier>
            <path d="M5 7h6M8 4v6" stroke="#1818d0" strokeWidth="2" />
          </Magnifier>
        </button>
      </div>
    </footer>
  );
}

export default function App() {
  return (
    <div className="overflow-hidden bg-[#c9dae4] font-['Liberation_Sans',Arial,sans-serif] text-[11px] text-black">
      <TitleBar />
      <Toolbar />
      <main className="relative mt-1 pl-[2px]">
        <div className="flex flex-col gap-[2px]">
          <PricePanel />
          <VolumePanel />
          <OscillatorPanel />
          <MacdPanel />
        </div>
        <TimeAxis />
        {/* Hand-drawn marks, they cross the panel borders */}
        <svg
          className="pointer-events-none absolute inset-0 h-full w-full"
          aria-hidden="true"
        >
          <g transform="translate(0 -70)" fill="none" stroke="#000" strokeWidth={2}>
            <ellipse cx={790} cy={558} rx={18} ry={20} />
            <ellipse cx={787} cy={641} rx={17} ry={23} />
          </g>
        </svg>
      </main>
      <BottomBar />
      <div className="flex h-1">
        <div className="w-[95px] bg-[#58a848]" />
        <div className="grow bg-[#2878e8]" />
        <div className="w-[272px] bg-[#18a0f0]" />
      </div>
    </div>
  );
}
